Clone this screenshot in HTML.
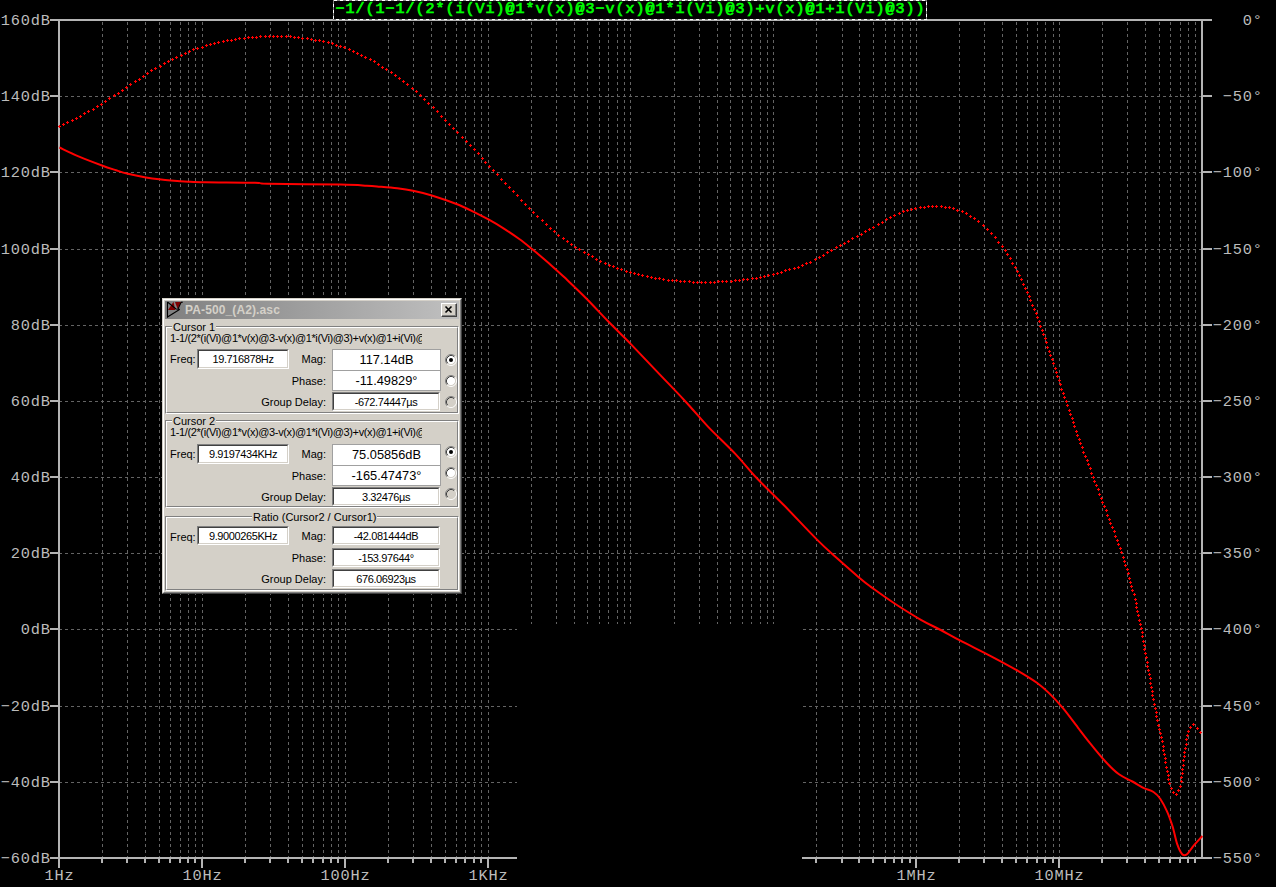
<!DOCTYPE html><html><head><meta charset="utf-8"><style>
*{margin:0;padding:0;box-sizing:border-box}
html,body{width:1276px;height:887px;background:#000;overflow:hidden;position:relative}
#dlg{position:absolute;left:162px;top:298px;width:300px;height:296px;background:#d4d0c8;
 border-top:1px solid #d4d0c8;border-left:1px solid #d4d0c8;border-right:1px solid #404040;border-bottom:1px solid #404040;
 font-family:"Liberation Sans",sans-serif;font-size:11px;color:#000}
#dlg .in{position:absolute;left:0;top:0;right:0;bottom:0;border-top:1px solid #fff;border-left:1px solid #fff;border-right:1px solid #808080;border-bottom:1px solid #808080}
.a{position:absolute;white-space:nowrap;line-height:13px}
.tb{position:absolute;background:#fff;border-top:1px solid #808080;border-left:1px solid #808080;border-right:1px solid #fff;border-bottom:1px solid #fff}
.tb .i{position:absolute;left:0;top:0;right:0;bottom:0;border-top:1px solid #404040;border-left:1px solid #404040;border-right:1px solid #d4d0c8;border-bottom:1px solid #d4d0c8;text-align:center;line-height:16px;font-size:11px;letter-spacing:-0.4px}
.fb{position:absolute;background:#fff;border:1px solid #a0a0a0;text-align:center;line-height:19px;font-size:12.8px}
.gb{position:absolute;border-top:1px solid #808080;border-left:1px solid #808080;border-right:1px solid #fff;border-bottom:1px solid #fff}
.gb .i{position:absolute;left:0;top:0;right:0;bottom:0;border-top:1px solid #fff;border-left:1px solid #fff;border-right:1px solid #808080;border-bottom:1px solid #808080}
.lbl{position:absolute;background:#d4d0c8;padding:0 1px;line-height:12px}
.rad{position:absolute;width:12px;height:12px}
</style></head><body><svg width="1276" height="887" viewBox="0 0 1276 887" style="position:absolute;left:0;top:0">
<defs><clipPath id="plot"><rect x="60" y="21" width="1141" height="836"/></clipPath><clipPath id="plot2"><rect x="57" y="21" width="1147" height="836"/></clipPath><clipPath id="blank"><path d="M0,0H1276V887H802V624H517V887H0Z"/></clipPath></defs>
<g clip-path="url(#blank)">
<path d="M102.5,22V857M127.5,22V857M145.5,22V857M159.5,22V857M170.5,22V857M180.5,22V857M188.5,22V857M195.5,22V857M202.5,22V857M245.5,22V857M270.5,22V857M288.5,22V857M302.5,22V857M313.5,22V857M323.5,22V857M331.5,22V857M338.5,22V857M345.5,22V857M388.5,22V857M413.5,22V857M431.5,22V857M445.5,22V857M456.5,22V857M465.5,22V857M474.5,22V857M481.5,22V857M488.5,22V857M531.5,22V857M556.5,22V857M574.5,22V857M587.5,22V857M599.5,22V857M608.5,22V857M617.5,22V857M624.5,22V857M630.5,22V857M674.5,22V857M699.5,22V857M717.5,22V857M730.5,22V857M742.5,22V857M751.5,22V857M760.5,22V857M767.5,22V857M773.5,22V857M816.5,22V857M842.5,22V857M859.5,22V857M873.5,22V857M885.5,22V857M894.5,22V857M902.5,22V857M910.5,22V857M916.5,22V857M959.5,22V857M984.5,22V857M1002.5,22V857M1016.5,22V857M1027.5,22V857M1037.5,22V857M1045.5,22V857M1053.5,22V857M1059.5,22V857M1102.5,22V857M1127.5,22V857M1145.5,22V857M1159.5,22V857M1170.5,22V857M1180.5,22V857M1188.5,22V857M1195.5,22V857" stroke="#646464" stroke-width="1" stroke-dasharray="3 3" shape-rendering="crispEdges" fill="none"/>
<path d="M59,96.5H1201M59,172.5H1201M59,249.5H1201M59,325.5H1201M59,401.5H1201M59,477.5H1201M59,553.5H1201M59,629.5H1201M59,706.5H1201M59,782.5H1201" stroke="#646464" stroke-width="1" stroke-dasharray="3 3" shape-rendering="crispEdges" fill="none"/>
<g fill="#b4b4b4" shape-rendering="crispEdges">
<rect x="58" y="19" width="1145" height="2"/>
<rect x="58" y="857" width="1145" height="2"/>
<rect x="58" y="19" width="2" height="840"/>
<rect x="1201" y="19" width="2" height="840"/>
<rect x="50" y="19" width="9" height="2"/>
<rect x="1202" y="19" width="10" height="2"/>
<rect x="50" y="95" width="9" height="2"/>
<rect x="1202" y="95" width="10" height="2"/>
<rect x="50" y="171" width="9" height="2"/>
<rect x="1202" y="171" width="10" height="2"/>
<rect x="50" y="248" width="9" height="2"/>
<rect x="1202" y="248" width="10" height="2"/>
<rect x="50" y="324" width="9" height="2"/>
<rect x="1202" y="324" width="10" height="2"/>
<rect x="50" y="400" width="9" height="2"/>
<rect x="1202" y="400" width="10" height="2"/>
<rect x="50" y="476" width="9" height="2"/>
<rect x="1202" y="476" width="10" height="2"/>
<rect x="50" y="552" width="9" height="2"/>
<rect x="1202" y="552" width="10" height="2"/>
<rect x="50" y="628" width="9" height="2"/>
<rect x="1202" y="628" width="10" height="2"/>
<rect x="50" y="705" width="9" height="2"/>
<rect x="1202" y="705" width="10" height="2"/>
<rect x="50" y="781" width="9" height="2"/>
<rect x="1202" y="781" width="10" height="2"/>
<rect x="50" y="857" width="9" height="2"/>
<rect x="1202" y="857" width="10" height="2"/>
<rect x="101" y="858" width="2" height="5"/>
<rect x="126" y="858" width="2" height="5"/>
<rect x="144" y="858" width="2" height="5"/>
<rect x="158" y="858" width="2" height="5"/>
<rect x="169" y="858" width="2" height="5"/>
<rect x="179" y="858" width="2" height="5"/>
<rect x="187" y="858" width="2" height="5"/>
<rect x="194" y="858" width="2" height="5"/>
<rect x="201" y="858" width="2" height="10"/>
<rect x="244" y="858" width="2" height="5"/>
<rect x="269" y="858" width="2" height="5"/>
<rect x="287" y="858" width="2" height="5"/>
<rect x="301" y="858" width="2" height="5"/>
<rect x="312" y="858" width="2" height="5"/>
<rect x="322" y="858" width="2" height="5"/>
<rect x="330" y="858" width="2" height="5"/>
<rect x="337" y="858" width="2" height="5"/>
<rect x="344" y="858" width="2" height="10"/>
<rect x="387" y="858" width="2" height="5"/>
<rect x="412" y="858" width="2" height="5"/>
<rect x="430" y="858" width="2" height="5"/>
<rect x="444" y="858" width="2" height="5"/>
<rect x="455" y="858" width="2" height="5"/>
<rect x="464" y="858" width="2" height="5"/>
<rect x="473" y="858" width="2" height="5"/>
<rect x="480" y="858" width="2" height="5"/>
<rect x="487" y="858" width="2" height="10"/>
<rect x="530" y="858" width="2" height="5"/>
<rect x="555" y="858" width="2" height="5"/>
<rect x="573" y="858" width="2" height="5"/>
<rect x="586" y="858" width="2" height="5"/>
<rect x="598" y="858" width="2" height="5"/>
<rect x="607" y="858" width="2" height="5"/>
<rect x="616" y="858" width="2" height="5"/>
<rect x="623" y="858" width="2" height="5"/>
<rect x="629" y="858" width="2" height="10"/>
<rect x="673" y="858" width="2" height="5"/>
<rect x="698" y="858" width="2" height="5"/>
<rect x="716" y="858" width="2" height="5"/>
<rect x="729" y="858" width="2" height="5"/>
<rect x="741" y="858" width="2" height="5"/>
<rect x="750" y="858" width="2" height="5"/>
<rect x="759" y="858" width="2" height="5"/>
<rect x="766" y="858" width="2" height="5"/>
<rect x="772" y="858" width="2" height="10"/>
<rect x="815" y="858" width="2" height="5"/>
<rect x="841" y="858" width="2" height="5"/>
<rect x="858" y="858" width="2" height="5"/>
<rect x="872" y="858" width="2" height="5"/>
<rect x="884" y="858" width="2" height="5"/>
<rect x="893" y="858" width="2" height="5"/>
<rect x="901" y="858" width="2" height="5"/>
<rect x="909" y="858" width="2" height="5"/>
<rect x="915" y="858" width="2" height="10"/>
<rect x="958" y="858" width="2" height="5"/>
<rect x="983" y="858" width="2" height="5"/>
<rect x="1001" y="858" width="2" height="5"/>
<rect x="1015" y="858" width="2" height="5"/>
<rect x="1026" y="858" width="2" height="5"/>
<rect x="1036" y="858" width="2" height="5"/>
<rect x="1044" y="858" width="2" height="5"/>
<rect x="1052" y="858" width="2" height="5"/>
<rect x="1058" y="858" width="2" height="10"/>
<rect x="1101" y="858" width="2" height="5"/>
<rect x="1126" y="858" width="2" height="5"/>
<rect x="1144" y="858" width="2" height="5"/>
<rect x="1158" y="858" width="2" height="5"/>
<rect x="1169" y="858" width="2" height="5"/>
<rect x="1179" y="858" width="2" height="5"/>
<rect x="1187" y="858" width="2" height="5"/>
<rect x="1194" y="858" width="2" height="5"/>
<rect x="58" y="858" width="2" height="10"/>
</g>
<g font-family="Liberation Mono, monospace" font-size="15.3" letter-spacing="0.82" fill="#bcbcbc">
<text x="50.8" y="24.6" text-anchor="end">160dB</text>
<text x="1262.8" y="24.6" text-anchor="end">0°</text>
<text x="50.8" y="100.6" text-anchor="end">140dB</text>
<text x="1262.8" y="100.6" text-anchor="end">−50°</text>
<text x="50.8" y="176.6" text-anchor="end">120dB</text>
<text x="1262.8" y="176.6" text-anchor="end">−100°</text>
<text x="50.8" y="253.6" text-anchor="end">100dB</text>
<text x="1262.8" y="253.6" text-anchor="end">−150°</text>
<text x="50.8" y="329.6" text-anchor="end">80dB</text>
<text x="1262.8" y="329.6" text-anchor="end">−200°</text>
<text x="50.8" y="405.6" text-anchor="end">60dB</text>
<text x="1262.8" y="405.6" text-anchor="end">−250°</text>
<text x="50.8" y="481.6" text-anchor="end">40dB</text>
<text x="1262.8" y="481.6" text-anchor="end">−300°</text>
<text x="50.8" y="557.6" text-anchor="end">20dB</text>
<text x="1262.8" y="557.6" text-anchor="end">−350°</text>
<text x="50.8" y="633.6" text-anchor="end">0dB</text>
<text x="1262.8" y="633.6" text-anchor="end">−400°</text>
<text x="50.8" y="710.6" text-anchor="end">−20dB</text>
<text x="1262.8" y="710.6" text-anchor="end">−450°</text>
<text x="50.8" y="786.6" text-anchor="end">−40dB</text>
<text x="1262.8" y="786.6" text-anchor="end">−500°</text>
<text x="50.8" y="862.6" text-anchor="end">−60dB</text>
<text x="1262.8" y="862.6" text-anchor="end">−550°</text>
<text x="59.4" y="880" text-anchor="middle">1Hz</text>
<text x="202.4" y="880" text-anchor="middle">10Hz</text>
<text x="345.4" y="880" text-anchor="middle">100Hz</text>
<text x="488.4" y="880" text-anchor="middle">1KHz</text>
<text x="916.4" y="880" text-anchor="middle">1MHz</text>
<text x="1059.4" y="880" text-anchor="middle">10MHz</text>
</g>
<g clip-path="url(#plot2)">
<path d="M59.4,147.5 C62.6,149.0 71.4,153.4 78.5,156.4 C85.6,159.4 95.7,163.2 102.0,165.5 C108.3,167.9 111.8,168.9 116.1,170.3 C120.4,171.7 122.9,172.6 127.9,173.8 C132.9,175.0 140.7,176.5 145.9,177.4 C151.1,178.3 155.0,178.8 159.2,179.3 C163.4,179.8 166.2,180.1 171.0,180.5 C175.8,180.9 182.4,181.4 188.2,181.7 C193.9,182.0 194.4,182.1 205.5,182.3 C216.6,182.5 244.6,182.5 255.0,182.8 C265.4,183.1 253.7,183.5 268.0,183.8 C282.3,184.1 324.4,184.3 340.9,184.6 C357.4,184.9 360.3,185.4 366.8,185.8 C373.3,186.1 374.9,186.3 380.0,186.7 C385.1,187.1 391.8,187.6 397.3,188.3 C402.8,189.0 407.2,189.6 413.0,190.8 C418.8,192.0 424.7,193.3 431.8,195.5 C438.9,197.7 448.7,201.0 455.8,203.8 C462.9,206.6 469.2,209.7 474.7,212.3 C480.2,215.0 484.2,217.1 488.9,219.7 C493.6,222.3 498.1,224.9 503.1,228.1 C508.1,231.3 514.0,235.3 518.9,238.8 C523.8,242.3 527.3,245.2 532.3,249.3 C537.3,253.3 543.5,258.6 548.9,263.3 C554.3,268.1 558.4,271.7 564.7,277.6 C571.0,283.6 579.6,291.7 586.8,299.0 C594.0,306.3 600.7,313.7 608.1,321.3 C615.5,328.9 623.0,336.1 631.1,344.4 C639.2,352.8 647.8,361.9 656.8,371.4 C665.8,380.9 676.6,391.9 685.2,401.2 C693.8,410.4 699.9,418.1 708.2,426.9 C716.6,435.7 727.2,445.3 735.3,453.9 C743.4,462.5 748.8,469.7 756.9,478.3 C765.0,486.9 774.1,495.2 784.0,505.3 C793.9,515.4 807.9,530.5 816.5,539.1 C825.1,547.7 828.2,550.3 835.4,556.8 C842.6,563.2 853.6,572.9 859.5,577.9 C865.4,582.9 864.6,582.3 870.5,586.6 C876.4,590.8 886.2,598.0 894.6,603.5 C903.0,609.0 913.2,615.4 920.9,619.8 C928.6,624.2 934.1,626.5 940.7,630.0 C947.3,633.5 952.0,636.4 960.4,640.7 C968.8,645.1 981.7,651.3 991.2,656.3 C1000.7,661.3 1009.8,666.2 1017.5,670.6 C1025.2,675.1 1031.9,679.2 1037.2,683.0 C1042.5,686.8 1044.9,689.1 1049.3,693.4 C1053.7,697.7 1058.6,703.0 1063.6,708.9 C1068.5,714.9 1074.6,723.3 1079.0,729.0 C1083.4,734.8 1085.8,738.0 1090.2,743.4 C1094.6,748.9 1100.8,756.6 1105.6,761.7 C1110.4,766.9 1114.5,771.0 1119.0,774.3 C1123.5,777.6 1128.2,779.2 1132.4,781.5 C1136.6,783.8 1140.4,786.4 1143.9,788.1 C1147.4,789.8 1150.8,790.2 1153.5,792.0 C1156.2,793.8 1158.0,795.5 1160.2,798.7 C1162.4,801.9 1164.8,806.5 1166.9,811.1 C1169.0,815.7 1170.8,820.9 1172.6,826.5 C1174.3,832.1 1175.8,840.1 1177.4,844.7 C1179.0,849.3 1180.6,852.6 1182.2,854.2 C1183.8,855.8 1185.1,855.6 1187.0,854.2 C1188.9,852.8 1191.2,848.6 1193.7,845.6 C1196.2,842.6 1200.9,837.6 1202.3,836.0" fill="none" stroke="#ff0000" stroke-width="2.0" stroke-linejoin="round"/>
<path d="M58,126h3v1h-3zM59,125h1v3h-1zM62,124h3v1h-3zM63,123h1v3h-1zM66,122h3v1h-3zM67,121h1v3h-1zM71,120h3v1h-3zM72,119h1v3h-1zM75,118h3v1h-3zM76,117h1v3h-1zM79,116h3v1h-3zM80,115h1v3h-1zM83,113h3v1h-3zM84,112h1v3h-1zM87,111h3v1h-3zM88,110h1v3h-1zM92,109h3v1h-3zM93,108h1v3h-1zM96,106h3v1h-3zM97,105h1v3h-1zM100,104h3v1h-3zM101,103h1v3h-1zM104,101h3v1h-3zM105,100h1v3h-1zM108,98h3v1h-3zM109,97h1v3h-1zM113,95h3v1h-3zM114,94h1v3h-1zM117,93h3v1h-3zM118,92h1v3h-1zM121,90h3v1h-3zM122,89h1v3h-1zM125,87h3v1h-3zM126,86h1v3h-1zM129,84h3v1h-3zM130,83h1v3h-1zM134,81h3v1h-3zM135,80h1v3h-1zM138,79h3v1h-3zM139,78h1v3h-1zM142,76h3v1h-3zM143,75h1v3h-1zM146,73h3v1h-3zM147,72h1v3h-1zM150,70h3v1h-3zM151,69h1v3h-1zM154,68h3v1h-3zM155,67h1v3h-1zM159,66h3v1h-3zM160,65h1v3h-1zM163,63h3v1h-3zM164,62h1v3h-1zM167,61h3v1h-3zM168,60h1v3h-1zM171,59h3v1h-3zM172,58h1v3h-1zM175,57h3v1h-3zM176,56h1v3h-1zM180,55h3v1h-3zM181,54h1v3h-1zM184,53h3v1h-3zM185,52h1v3h-1zM188,51h3v1h-3zM189,50h1v3h-1zM192,49h3v1h-3zM193,48h1v3h-1zM196,48h3v1h-3zM197,47h1v3h-1zM201,47h3v1h-3zM202,46h1v3h-1zM205,45h3v1h-3zM206,44h1v3h-1zM209,44h3v1h-3zM210,43h1v3h-1zM213,43h3v1h-3zM214,42h1v3h-1zM217,42h3v1h-3zM218,41h1v3h-1zM222,41h3v1h-3zM223,40h1v3h-1zM226,40h3v1h-3zM227,39h1v3h-1zM230,40h3v1h-3zM231,39h1v3h-1zM234,39h3v1h-3zM235,38h1v3h-1zM238,38h3v1h-3zM239,37h1v3h-1zM243,38h3v1h-3zM244,37h1v3h-1zM247,37h3v1h-3zM248,36h1v3h-1zM251,37h3v1h-3zM252,36h1v3h-1zM255,37h3v1h-3zM256,36h1v3h-1zM259,36h3v1h-3zM260,35h1v3h-1zM264,36h3v1h-3zM265,35h1v3h-1zM268,36h3v1h-3zM269,35h1v3h-1zM272,36h3v1h-3zM273,35h1v3h-1zM276,36h3v1h-3zM277,35h1v3h-1zM280,36h3v1h-3zM281,35h1v3h-1zM285,36h3v1h-3zM286,35h1v3h-1zM289,36h3v1h-3zM290,35h1v3h-1zM293,37h3v1h-3zM294,36h1v3h-1zM297,37h3v1h-3zM298,36h1v3h-1zM301,38h3v1h-3zM302,37h1v3h-1zM306,38h3v1h-3zM307,37h1v3h-1zM310,39h3v1h-3zM311,38h1v3h-1zM314,40h3v1h-3zM315,39h1v3h-1zM318,40h3v1h-3zM319,39h1v3h-1zM322,41h3v1h-3zM323,40h1v3h-1zM327,42h3v1h-3zM328,41h1v3h-1zM331,43h3v1h-3zM332,42h1v3h-1zM335,45h3v1h-3zM336,44h1v3h-1zM339,46h3v1h-3zM340,45h1v3h-1zM343,47h3v1h-3zM344,46h1v3h-1zM348,49h3v1h-3zM349,48h1v3h-1zM352,51h3v1h-3zM353,50h1v3h-1zM356,53h3v1h-3zM357,52h1v3h-1zM360,55h3v1h-3zM361,54h1v3h-1zM364,57h3v1h-3zM365,56h1v3h-1zM369,59h3v1h-3zM370,58h1v3h-1zM373,61h3v1h-3zM374,60h1v3h-1zM377,64h3v1h-3zM378,63h1v3h-1zM381,67h3v1h-3zM382,66h1v3h-1zM385,69h3v1h-3zM386,68h1v3h-1zM390,72h3v1h-3zM391,71h1v3h-1zM394,75h3v1h-3zM395,74h1v3h-1zM398,78h3v1h-3zM399,77h1v3h-1zM402,81h3v1h-3zM403,80h1v3h-1zM406,84h3v1h-3zM407,83h1v3h-1zM411,88h3v1h-3zM412,87h1v3h-1zM415,91h3v1h-3zM416,90h1v3h-1zM419,95h3v1h-3zM420,94h1v3h-1zM423,99h3v1h-3zM424,98h1v3h-1zM427,103h3v1h-3zM428,102h1v3h-1zM432,107h3v1h-3zM433,106h1v3h-1zM436,111h3v1h-3zM437,110h1v3h-1zM440,116h3v1h-3zM441,115h1v3h-1zM444,120h3v1h-3zM445,119h1v3h-1zM448,124h3v1h-3zM449,123h1v3h-1zM452,128h3v1h-3zM453,127h1v3h-1zM456,132h3v1h-3zM457,131h1v3h-1zM461,137h3v1h-3zM462,136h1v3h-1zM465,141h3v1h-3zM466,140h1v3h-1zM469,145h3v1h-3zM470,144h1v3h-1zM473,149h3v1h-3zM474,148h1v3h-1zM477,153h3v1h-3zM478,152h1v3h-1zM481,158h3v1h-3zM482,157h1v3h-1zM484,162h3v1h-3zM485,161h1v3h-1zM488,166h3v1h-3zM489,165h1v3h-1zM492,170h3v1h-3zM493,169h1v3h-1zM496,174h3v1h-3zM497,173h1v3h-1zM500,179h3v1h-3zM501,178h1v3h-1zM504,183h3v1h-3zM505,182h1v3h-1zM508,187h3v1h-3zM509,186h1v3h-1zM512,191h3v1h-3zM513,190h1v3h-1zM516,195h3v1h-3zM517,194h1v3h-1zM520,200h3v1h-3zM521,199h1v3h-1zM524,204h3v1h-3zM525,203h1v3h-1zM528,208h3v1h-3zM529,207h1v3h-1zM532,212h3v1h-3zM533,211h1v3h-1zM536,216h3v1h-3zM537,215h1v3h-1zM541,220h3v1h-3zM542,219h1v3h-1zM545,224h3v1h-3zM546,223h1v3h-1zM549,228h3v1h-3zM550,227h1v3h-1zM553,231h3v1h-3zM554,230h1v3h-1zM557,235h3v1h-3zM558,234h1v3h-1zM562,238h3v1h-3zM563,237h1v3h-1zM566,241h3v1h-3zM567,240h1v3h-1zM570,244h3v1h-3zM571,243h1v3h-1zM574,247h3v1h-3zM575,246h1v3h-1zM578,249h3v1h-3zM579,248h1v3h-1zM583,252h3v1h-3zM584,251h1v3h-1zM587,254h3v1h-3zM588,253h1v3h-1zM591,256h3v1h-3zM592,255h1v3h-1zM595,259h3v1h-3zM596,258h1v3h-1zM599,261h3v1h-3zM600,260h1v3h-1zM604,263h3v1h-3zM605,262h1v3h-1zM608,265h3v1h-3zM609,264h1v3h-1zM612,266h3v1h-3zM613,265h1v3h-1zM616,268h3v1h-3zM617,267h1v3h-1zM620,269h3v1h-3zM621,268h1v3h-1zM625,271h3v1h-3zM626,270h1v3h-1zM629,272h3v1h-3zM630,271h1v3h-1zM633,273h3v1h-3zM634,272h1v3h-1zM637,274h3v1h-3zM638,273h1v3h-1zM641,275h3v1h-3zM642,274h1v3h-1zM646,276h3v1h-3zM647,275h1v3h-1zM650,277h3v1h-3zM651,276h1v3h-1zM654,278h3v1h-3zM655,277h1v3h-1zM658,278h3v1h-3zM659,277h1v3h-1zM662,279h3v1h-3zM663,278h1v3h-1zM667,280h3v1h-3zM668,279h1v3h-1zM671,280h3v1h-3zM672,279h1v3h-1zM675,280h3v1h-3zM676,279h1v3h-1zM679,281h3v1h-3zM680,280h1v3h-1zM683,281h3v1h-3zM684,280h1v3h-1zM688,281h3v1h-3zM689,280h1v3h-1zM692,282h3v1h-3zM693,281h1v3h-1zM696,282h3v1h-3zM697,281h1v3h-1zM700,282h3v1h-3zM701,281h1v3h-1zM704,282h3v1h-3zM705,281h1v3h-1zM709,282h3v1h-3zM710,281h1v3h-1zM713,282h3v1h-3zM714,281h1v3h-1zM717,281h3v1h-3zM718,280h1v3h-1zM721,281h3v1h-3zM722,280h1v3h-1zM725,281h3v1h-3zM726,280h1v3h-1zM730,281h3v1h-3zM731,280h1v3h-1zM734,280h3v1h-3zM735,279h1v3h-1zM738,280h3v1h-3zM739,279h1v3h-1zM742,279h3v1h-3zM743,278h1v3h-1zM746,279h3v1h-3zM747,278h1v3h-1zM751,278h3v1h-3zM752,277h1v3h-1zM755,278h3v1h-3zM756,277h1v3h-1zM759,277h3v1h-3zM760,276h1v3h-1zM763,276h3v1h-3zM764,275h1v3h-1zM767,275h3v1h-3zM768,274h1v3h-1zM772,274h3v1h-3zM773,273h1v3h-1zM776,273h3v1h-3zM777,272h1v3h-1zM780,272h3v1h-3zM781,271h1v3h-1zM784,270h3v1h-3zM785,269h1v3h-1zM788,269h3v1h-3zM789,268h1v3h-1zM793,268h3v1h-3zM794,267h1v3h-1zM797,267h3v1h-3zM798,266h1v3h-1zM801,265h3v1h-3zM802,264h1v3h-1zM805,263h3v1h-3zM806,262h1v3h-1zM809,262h3v1h-3zM810,261h1v3h-1zM814,259h3v1h-3zM815,258h1v3h-1zM818,257h3v1h-3zM819,256h1v3h-1zM822,255h3v1h-3zM823,254h1v3h-1zM826,252h3v1h-3zM827,251h1v3h-1zM830,250h3v1h-3zM831,249h1v3h-1zM835,247h3v1h-3zM836,246h1v3h-1zM839,245h3v1h-3zM840,244h1v3h-1zM843,243h3v1h-3zM844,242h1v3h-1zM847,241h3v1h-3zM848,240h1v3h-1zM851,238h3v1h-3zM852,237h1v3h-1zM856,236h3v1h-3zM857,235h1v3h-1zM860,234h3v1h-3zM861,233h1v3h-1zM864,231h3v1h-3zM865,230h1v3h-1zM868,229h3v1h-3zM869,228h1v3h-1zM872,227h3v1h-3zM873,226h1v3h-1zM877,224h3v1h-3zM878,223h1v3h-1zM881,222h3v1h-3zM882,221h1v3h-1zM885,219h3v1h-3zM886,218h1v3h-1zM889,217h3v1h-3zM890,216h1v3h-1zM893,215h3v1h-3zM894,214h1v3h-1zM898,213h3v1h-3zM899,212h1v3h-1zM902,211h3v1h-3zM903,210h1v3h-1zM906,210h3v1h-3zM907,209h1v3h-1zM910,209h3v1h-3zM911,208h1v3h-1zM914,208h3v1h-3zM915,207h1v3h-1zM919,207h3v1h-3zM920,206h1v3h-1zM923,207h3v1h-3zM924,206h1v3h-1zM927,206h3v1h-3zM928,205h1v3h-1zM931,206h3v1h-3zM932,205h1v3h-1zM935,206h3v1h-3zM936,205h1v3h-1zM940,206h3v1h-3zM941,205h1v3h-1zM944,207h3v1h-3zM945,206h1v3h-1zM948,207h3v1h-3zM949,206h1v3h-1zM952,208h3v1h-3zM953,207h1v3h-1zM956,210h3v1h-3zM957,209h1v3h-1zM961,211h3v1h-3zM962,210h1v3h-1zM965,213h3v1h-3zM966,212h1v3h-1zM969,216h3v1h-3zM970,215h1v3h-1zM973,218h3v1h-3zM974,217h1v3h-1zM977,221h3v1h-3zM978,220h1v3h-1zM982,225h3v1h-3zM983,224h1v3h-1zM986,229h3v1h-3zM987,228h1v3h-1zM990,233h3v1h-3zM991,232h1v3h-1zM994,237h3v1h-3zM995,236h1v3h-1zM997,242h3v1h-3zM998,241h1v3h-1zM1001,246h3v1h-3zM1002,245h1v3h-1zM1004,250h3v1h-3zM1005,249h1v3h-1zM1006,254h3v1h-3zM1007,253h1v3h-1zM1009,258h3v1h-3zM1010,257h1v3h-1zM1011,263h3v1h-3zM1012,262h1v3h-1zM1014,267h3v1h-3zM1015,266h1v3h-1zM1016,271h3v1h-3zM1017,270h1v3h-1zM1018,275h3v1h-3zM1019,274h1v3h-1zM1020,279h3v1h-3zM1021,278h1v3h-1zM1022,284h3v1h-3zM1023,283h1v3h-1zM1024,288h3v1h-3zM1025,287h1v3h-1zM1026,292h3v1h-3zM1027,291h1v3h-1zM1028,296h3v1h-3zM1029,295h1v3h-1zM1029,300h3v1h-3zM1030,299h1v3h-1zM1031,305h3v1h-3zM1032,304h1v3h-1zM1033,309h3v1h-3zM1034,308h1v3h-1zM1035,313h3v1h-3zM1036,312h1v3h-1zM1036,317h3v1h-3zM1037,316h1v3h-1zM1038,321h3v1h-3zM1039,320h1v3h-1zM1039,326h3v1h-3zM1040,325h1v3h-1zM1041,330h3v1h-3zM1042,329h1v3h-1zM1042,334h3v1h-3zM1043,333h1v3h-1zM1044,338h3v1h-3zM1045,337h1v3h-1zM1045,342h3v1h-3zM1046,341h1v3h-1zM1046,347h3v1h-3zM1047,346h1v3h-1zM1048,351h3v1h-3zM1049,350h1v3h-1zM1049,355h3v1h-3zM1050,354h1v3h-1zM1051,359h3v1h-3zM1052,358h1v3h-1zM1052,363h3v1h-3zM1053,362h1v3h-1zM1054,368h3v1h-3zM1055,367h1v3h-1zM1055,372h3v1h-3zM1056,371h1v3h-1zM1056,376h3v1h-3zM1057,375h1v3h-1zM1058,380h3v1h-3zM1059,379h1v3h-1zM1059,384h3v1h-3zM1060,383h1v3h-1zM1060,389h3v1h-3zM1061,388h1v3h-1zM1062,393h3v1h-3zM1063,392h1v3h-1zM1063,397h3v1h-3zM1064,396h1v3h-1zM1065,401h3v1h-3zM1066,400h1v3h-1zM1066,405h3v1h-3zM1067,404h1v3h-1zM1068,410h3v1h-3zM1069,409h1v3h-1zM1069,414h3v1h-3zM1070,413h1v3h-1zM1071,418h3v1h-3zM1072,417h1v3h-1zM1072,422h3v1h-3zM1073,421h1v3h-1zM1073,426h3v1h-3zM1074,425h1v3h-1zM1075,431h3v1h-3zM1076,430h1v3h-1zM1076,435h3v1h-3zM1077,434h1v3h-1zM1078,439h3v1h-3zM1079,438h1v3h-1zM1079,443h3v1h-3zM1080,442h1v3h-1zM1081,447h3v1h-3zM1082,446h1v3h-1zM1082,452h3v1h-3zM1083,451h1v3h-1zM1084,456h3v1h-3zM1085,455h1v3h-1zM1086,460h3v1h-3zM1087,459h1v3h-1zM1087,464h3v1h-3zM1088,463h1v3h-1zM1089,468h3v1h-3zM1090,467h1v3h-1zM1090,473h3v1h-3zM1091,472h1v3h-1zM1092,477h3v1h-3zM1093,476h1v3h-1zM1093,481h3v1h-3zM1094,480h1v3h-1zM1095,485h3v1h-3zM1096,484h1v3h-1zM1097,489h3v1h-3zM1098,488h1v3h-1zM1098,494h3v1h-3zM1099,493h1v3h-1zM1100,498h3v1h-3zM1101,497h1v3h-1zM1101,502h3v1h-3zM1102,501h1v3h-1zM1103,506h3v1h-3zM1104,505h1v3h-1zM1105,510h3v1h-3zM1106,509h1v3h-1zM1106,515h3v1h-3zM1107,514h1v3h-1zM1108,519h3v1h-3zM1109,518h1v3h-1zM1109,523h3v1h-3zM1110,522h1v3h-1zM1111,527h3v1h-3zM1112,526h1v3h-1zM1113,531h3v1h-3zM1114,530h1v3h-1zM1114,536h3v1h-3zM1115,535h1v3h-1zM1116,540h3v1h-3zM1117,539h1v3h-1zM1117,544h3v1h-3zM1118,543h1v3h-1zM1119,548h3v1h-3zM1120,547h1v3h-1zM1120,552h3v1h-3zM1121,551h1v3h-1zM1122,557h3v1h-3zM1123,556h1v3h-1zM1123,561h3v1h-3zM1124,560h1v3h-1zM1124,565h3v1h-3zM1125,564h1v3h-1zM1126,569h3v1h-3zM1127,568h1v3h-1zM1127,573h3v1h-3zM1128,572h1v3h-1zM1128,578h3v1h-3zM1129,577h1v3h-1zM1129,582h3v1h-3zM1130,581h1v3h-1zM1130,586h3v1h-3zM1131,585h1v3h-1zM1131,590h3v1h-3zM1132,589h1v3h-1zM1133,594h3v1h-3zM1134,593h1v3h-1zM1134,599h3v1h-3zM1135,598h1v3h-1zM1135,603h3v1h-3zM1136,602h1v3h-1zM1135,607h3v1h-3zM1136,606h1v3h-1zM1136,611h3v1h-3zM1137,610h1v3h-1zM1137,615h3v1h-3zM1138,614h1v3h-1zM1138,620h3v1h-3zM1139,619h1v3h-1zM1139,624h3v1h-3zM1140,623h1v3h-1zM1140,628h3v1h-3zM1141,627h1v3h-1zM1141,632h3v1h-3zM1142,631h1v3h-1zM1141,636h3v1h-3zM1142,635h1v3h-1zM1142,641h3v1h-3zM1143,640h1v3h-1zM1143,645h3v1h-3zM1144,644h1v3h-1zM1143,649h3v1h-3zM1144,648h1v3h-1zM1144,653h3v1h-3zM1145,652h1v3h-1zM1145,657h3v1h-3zM1146,656h1v3h-1zM1146,662h3v1h-3zM1147,661h1v3h-1zM1146,666h3v1h-3zM1147,665h1v3h-1zM1147,670h3v1h-3zM1148,669h1v3h-1zM1148,674h3v1h-3zM1149,673h1v3h-1zM1149,678h3v1h-3zM1150,677h1v3h-1zM1149,683h3v1h-3zM1150,682h1v3h-1zM1150,687h3v1h-3zM1151,686h1v3h-1zM1151,691h3v1h-3zM1152,690h1v3h-1zM1151,695h3v1h-3zM1152,694h1v3h-1zM1152,699h3v1h-3zM1153,698h1v3h-1zM1153,704h3v1h-3zM1154,703h1v3h-1zM1154,708h3v1h-3zM1155,707h1v3h-1zM1155,712h3v1h-3zM1156,711h1v3h-1zM1155,716h3v1h-3zM1156,715h1v3h-1zM1156,720h3v1h-3zM1157,719h1v3h-1zM1157,725h3v1h-3zM1158,724h1v3h-1zM1158,729h3v1h-3zM1159,728h1v3h-1zM1159,733h3v1h-3zM1160,732h1v3h-1zM1160,737h3v1h-3zM1161,736h1v3h-1zM1161,741h3v1h-3zM1162,740h1v3h-1zM1162,746h3v1h-3zM1163,745h1v3h-1zM1162,750h3v1h-3zM1163,749h1v3h-1zM1163,754h3v1h-3zM1164,753h1v3h-1zM1164,758h3v1h-3zM1165,757h1v3h-1zM1164,762h3v1h-3zM1165,761h1v3h-1zM1165,767h3v1h-3zM1166,766h1v3h-1zM1166,771h3v1h-3zM1167,770h1v3h-1zM1167,775h3v1h-3zM1168,774h1v3h-1zM1167,779h3v1h-3zM1168,778h1v3h-1zM1168,783h3v1h-3zM1169,782h1v3h-1zM1170,788h3v1h-3zM1171,787h1v3h-1zM1172,792h3v1h-3zM1173,791h1v3h-1zM1175,794h3v1h-3zM1176,793h1v3h-1zM1177,790h3v1h-3zM1178,789h1v3h-1zM1179,786h3v1h-3zM1180,785h1v3h-1zM1180,781h3v1h-3zM1181,780h1v3h-1zM1180,777h3v1h-3zM1181,776h1v3h-1zM1181,773h3v1h-3zM1182,772h1v3h-1zM1181,769h3v1h-3zM1182,768h1v3h-1zM1182,765h3v1h-3zM1183,764h1v3h-1zM1182,760h3v1h-3zM1183,759h1v3h-1zM1183,756h3v1h-3zM1184,755h1v3h-1zM1183,752h3v1h-3zM1184,751h1v3h-1zM1184,748h3v1h-3zM1185,747h1v3h-1zM1185,744h3v1h-3zM1186,743h1v3h-1zM1185,739h3v1h-3zM1186,738h1v3h-1zM1186,735h3v1h-3zM1187,734h1v3h-1zM1187,731h3v1h-3zM1188,730h1v3h-1zM1189,727h3v1h-3zM1190,726h1v3h-1zM1192,724h3v1h-3zM1193,723h1v3h-1zM1196,728h3v1h-3zM1197,727h1v3h-1zM1199,732h3v1h-3zM1200,731h1v3h-1z" fill="#ff0000" shape-rendering="crispEdges"/>
</g>
</g>
<rect x="333.5" y="0.5" width="593" height="19" fill="#000" stroke="#808080" stroke-width="1" shape-rendering="crispEdges"/>
<rect x="333.5" y="0.5" width="593" height="19" fill="none" stroke="#ffffff" stroke-width="1" stroke-dasharray="3 3" shape-rendering="crispEdges"/>
<text x="335.5" y="13" font-family="Liberation Mono, monospace" font-size="15" letter-spacing="1" fill="#00ff00" stroke="#00ff00" stroke-width="0.7">−1/(1−1/(2*(i(Vi)@1*v(x)@3−v(x)@1*i(Vi)@3)+v(x)@1+i(Vi)@3))</text>
</svg><div id="dlg"><div class="in"></div><div class="a" style="left:2px;top:2px;width:294px;height:18px;background:linear-gradient(to right,#808080,#c0c0c0)"></div>
<svg class="a" style="left:3px;top:2px" width="18" height="18" viewBox="0 0 18 18"><path d="M7.5,0.8 L2,8.9 L9.2,8.9 Z" fill="#800000"/><path d="M9,1 L15.1,1 L11.5,7.8 Z" fill="#800000"/><path d="M1.5,1 V16.8 M1.5,16 L13.5,8.5 M1.5,1 L10,8 L14,8.3 M15,1.3 H16.8 M15,1.5 L12,8" stroke="#000" stroke-width="1.1" fill="none"/></svg>
<div class="a" style="left:22px;top:2px;color:#d4d0c8;font-weight:bold;font-size:12px;line-height:18px;letter-spacing:0.12px">PA-500_(A2).asc</div>
<div class="a" style="left:278px;top:4px;width:16px;height:14px;background:#d4d0c8;border-top:1px solid #fff;border-left:1px solid #fff;border-right:1px solid #404040;border-bottom:1px solid #404040;box-shadow:inset -1px -1px #808080"><svg width="14" height="12" viewBox="0 0 14 12" style="position:absolute;left:0;top:0"><path d="M3.5,2.5 L9.5,8.5 M9.5,2.5 L3.5,8.5" stroke="#000" stroke-width="1.6"/></svg></div>
<div class="gb" style="left:2px;top:27px;width:294px;height:88px"><div class="i"></div></div>
<div class="lbl" style="left:9px;top:22px">Cursor 1</div>
<div class="a" style="left:7px;top:33px;width:252px;overflow:hidden;letter-spacing:-0.38px">1-1/(2*(i(Vi)@1*v(x)@3-v(x)@1*i(Vi)@3)+v(x)@1+i(Vi)@3)</div>
<div class="a" style="left:7px;top:54px">Freq:</div>
<div class="tb" style="left:34px;top:50px;width:92px;height:20px"><div class="i">19.716878Hz</div></div>
<div class="a" style="left:13px;top:54px;width:150px;text-align:right">Mag:</div>
<div class="a" style="left:13px;top:76px;width:150px;text-align:right">Phase:</div>
<div class="a" style="left:13px;top:97px;width:150px;text-align:right">Group Delay:</div>
<div class="fb" style="left:169px;top:50px;width:109px;height:22px">117.14dB</div>
<div class="fb" style="left:169px;top:71px;width:109px;height:21px">-11.49829°</div>
<div class="tb" style="left:169px;top:93px;width:108px;height:19px"><div class="i">-672.74447µs</div></div>
<svg class="rad" style="left:282px;top:55px" viewBox="0 0 12 12"><circle cx="6" cy="6" r="4.5" fill="#fff"/><path d="M9.89,2.11 A5.5,5.5 0 0 0 2.11,9.89" fill="none" stroke="#808080" stroke-width="1"/><path d="M9.18,2.82 A4.5,4.5 0 0 0 2.82,9.18" fill="none" stroke="#404040" stroke-width="1"/><path d="M9.89,2.11 A5.5,5.5 0 0 1 2.11,9.89" fill="none" stroke="#ffffff" stroke-width="1"/><path d="M9.18,2.82 A4.5,4.5 0 0 1 2.82,9.18" fill="none" stroke="#d4d0c8" stroke-width="1"/><circle cx="6" cy="6" r="2" fill="#000"/></svg>
<svg class="rad" style="left:282px;top:76px" viewBox="0 0 12 12"><circle cx="6" cy="6" r="4.5" fill="#fff"/><path d="M9.89,2.11 A5.5,5.5 0 0 0 2.11,9.89" fill="none" stroke="#808080" stroke-width="1"/><path d="M9.18,2.82 A4.5,4.5 0 0 0 2.82,9.18" fill="none" stroke="#404040" stroke-width="1"/><path d="M9.89,2.11 A5.5,5.5 0 0 1 2.11,9.89" fill="none" stroke="#ffffff" stroke-width="1"/><path d="M9.18,2.82 A4.5,4.5 0 0 1 2.82,9.18" fill="none" stroke="#d4d0c8" stroke-width="1"/></svg>
<svg class="rad" style="left:282px;top:97px" viewBox="0 0 12 12"><circle cx="6" cy="6" r="4.5" fill="#d4d0c8"/><path d="M9.89,2.11 A5.5,5.5 0 0 0 2.11,9.89" fill="none" stroke="#808080" stroke-width="1"/><path d="M9.18,2.82 A4.5,4.5 0 0 0 2.82,9.18" fill="none" stroke="#404040" stroke-width="1"/><path d="M9.89,2.11 A5.5,5.5 0 0 1 2.11,9.89" fill="none" stroke="#ffffff" stroke-width="1"/><path d="M9.18,2.82 A4.5,4.5 0 0 1 2.82,9.18" fill="none" stroke="#d4d0c8" stroke-width="1"/></svg>
<div class="gb" style="left:2px;top:121px;width:294px;height:88px"><div class="i"></div></div>
<div class="lbl" style="left:9px;top:116px">Cursor 2</div>
<div class="a" style="left:7px;top:127px;width:252px;overflow:hidden;letter-spacing:-0.38px">1-1/(2*(i(Vi)@1*v(x)@3-v(x)@1*i(Vi)@3)+v(x)@1+i(Vi)@3)</div>
<div class="a" style="left:7px;top:149px">Freq:</div>
<div class="tb" style="left:34px;top:145px;width:92px;height:20px"><div class="i">9.9197434KHz</div></div>
<div class="a" style="left:13px;top:149px;width:150px;text-align:right">Mag:</div>
<div class="a" style="left:13px;top:171px;width:150px;text-align:right">Phase:</div>
<div class="a" style="left:13px;top:192px;width:150px;text-align:right">Group Delay:</div>
<div class="fb" style="left:169px;top:145px;width:109px;height:22px">75.05856dB</div>
<div class="fb" style="left:169px;top:166px;width:109px;height:21px">-165.47473°</div>
<div class="tb" style="left:169px;top:188px;width:108px;height:19px"><div class="i">3.32476µs</div></div>
<svg class="rad" style="left:282px;top:147px" viewBox="0 0 12 12"><circle cx="6" cy="6" r="4.5" fill="#fff"/><path d="M9.89,2.11 A5.5,5.5 0 0 0 2.11,9.89" fill="none" stroke="#808080" stroke-width="1"/><path d="M9.18,2.82 A4.5,4.5 0 0 0 2.82,9.18" fill="none" stroke="#404040" stroke-width="1"/><path d="M9.89,2.11 A5.5,5.5 0 0 1 2.11,9.89" fill="none" stroke="#ffffff" stroke-width="1"/><path d="M9.18,2.82 A4.5,4.5 0 0 1 2.82,9.18" fill="none" stroke="#d4d0c8" stroke-width="1"/><circle cx="6" cy="6" r="2" fill="#000"/></svg>
<svg class="rad" style="left:282px;top:168px" viewBox="0 0 12 12"><circle cx="6" cy="6" r="4.5" fill="#fff"/><path d="M9.89,2.11 A5.5,5.5 0 0 0 2.11,9.89" fill="none" stroke="#808080" stroke-width="1"/><path d="M9.18,2.82 A4.5,4.5 0 0 0 2.82,9.18" fill="none" stroke="#404040" stroke-width="1"/><path d="M9.89,2.11 A5.5,5.5 0 0 1 2.11,9.89" fill="none" stroke="#ffffff" stroke-width="1"/><path d="M9.18,2.82 A4.5,4.5 0 0 1 2.82,9.18" fill="none" stroke="#d4d0c8" stroke-width="1"/></svg>
<svg class="rad" style="left:282px;top:189px" viewBox="0 0 12 12"><circle cx="6" cy="6" r="4.5" fill="#d4d0c8"/><path d="M9.89,2.11 A5.5,5.5 0 0 0 2.11,9.89" fill="none" stroke="#808080" stroke-width="1"/><path d="M9.18,2.82 A4.5,4.5 0 0 0 2.82,9.18" fill="none" stroke="#404040" stroke-width="1"/><path d="M9.89,2.11 A5.5,5.5 0 0 1 2.11,9.89" fill="none" stroke="#ffffff" stroke-width="1"/><path d="M9.18,2.82 A4.5,4.5 0 0 1 2.82,9.18" fill="none" stroke="#d4d0c8" stroke-width="1"/></svg>
<div class="gb" style="left:2px;top:217px;width:294px;height:75px"><div class="i"></div></div>
<div class="lbl" style="left:89px;top:212px">Ratio (Cursor2 / Cursor1)</div>
<div class="a" style="left:7px;top:232px">Freq:</div>
<div class="tb" style="left:34px;top:227px;width:92px;height:19px"><div class="i">9.9000265KHz</div></div>
<div class="a" style="left:13px;top:231px;width:150px;text-align:right">Mag:</div>
<div class="tb" style="left:169px;top:227px;width:108px;height:19px"><div class="i">-42.081444dB</div></div>
<div class="a" style="left:13px;top:253px;width:150px;text-align:right">Phase:</div>
<div class="tb" style="left:169px;top:249px;width:108px;height:19px"><div class="i">-153.97644°</div></div>
<div class="a" style="left:13px;top:274px;width:150px;text-align:right">Group Delay:</div>
<div class="tb" style="left:169px;top:270px;width:108px;height:19px"><div class="i">676.06923µs</div></div></div></body></html>
